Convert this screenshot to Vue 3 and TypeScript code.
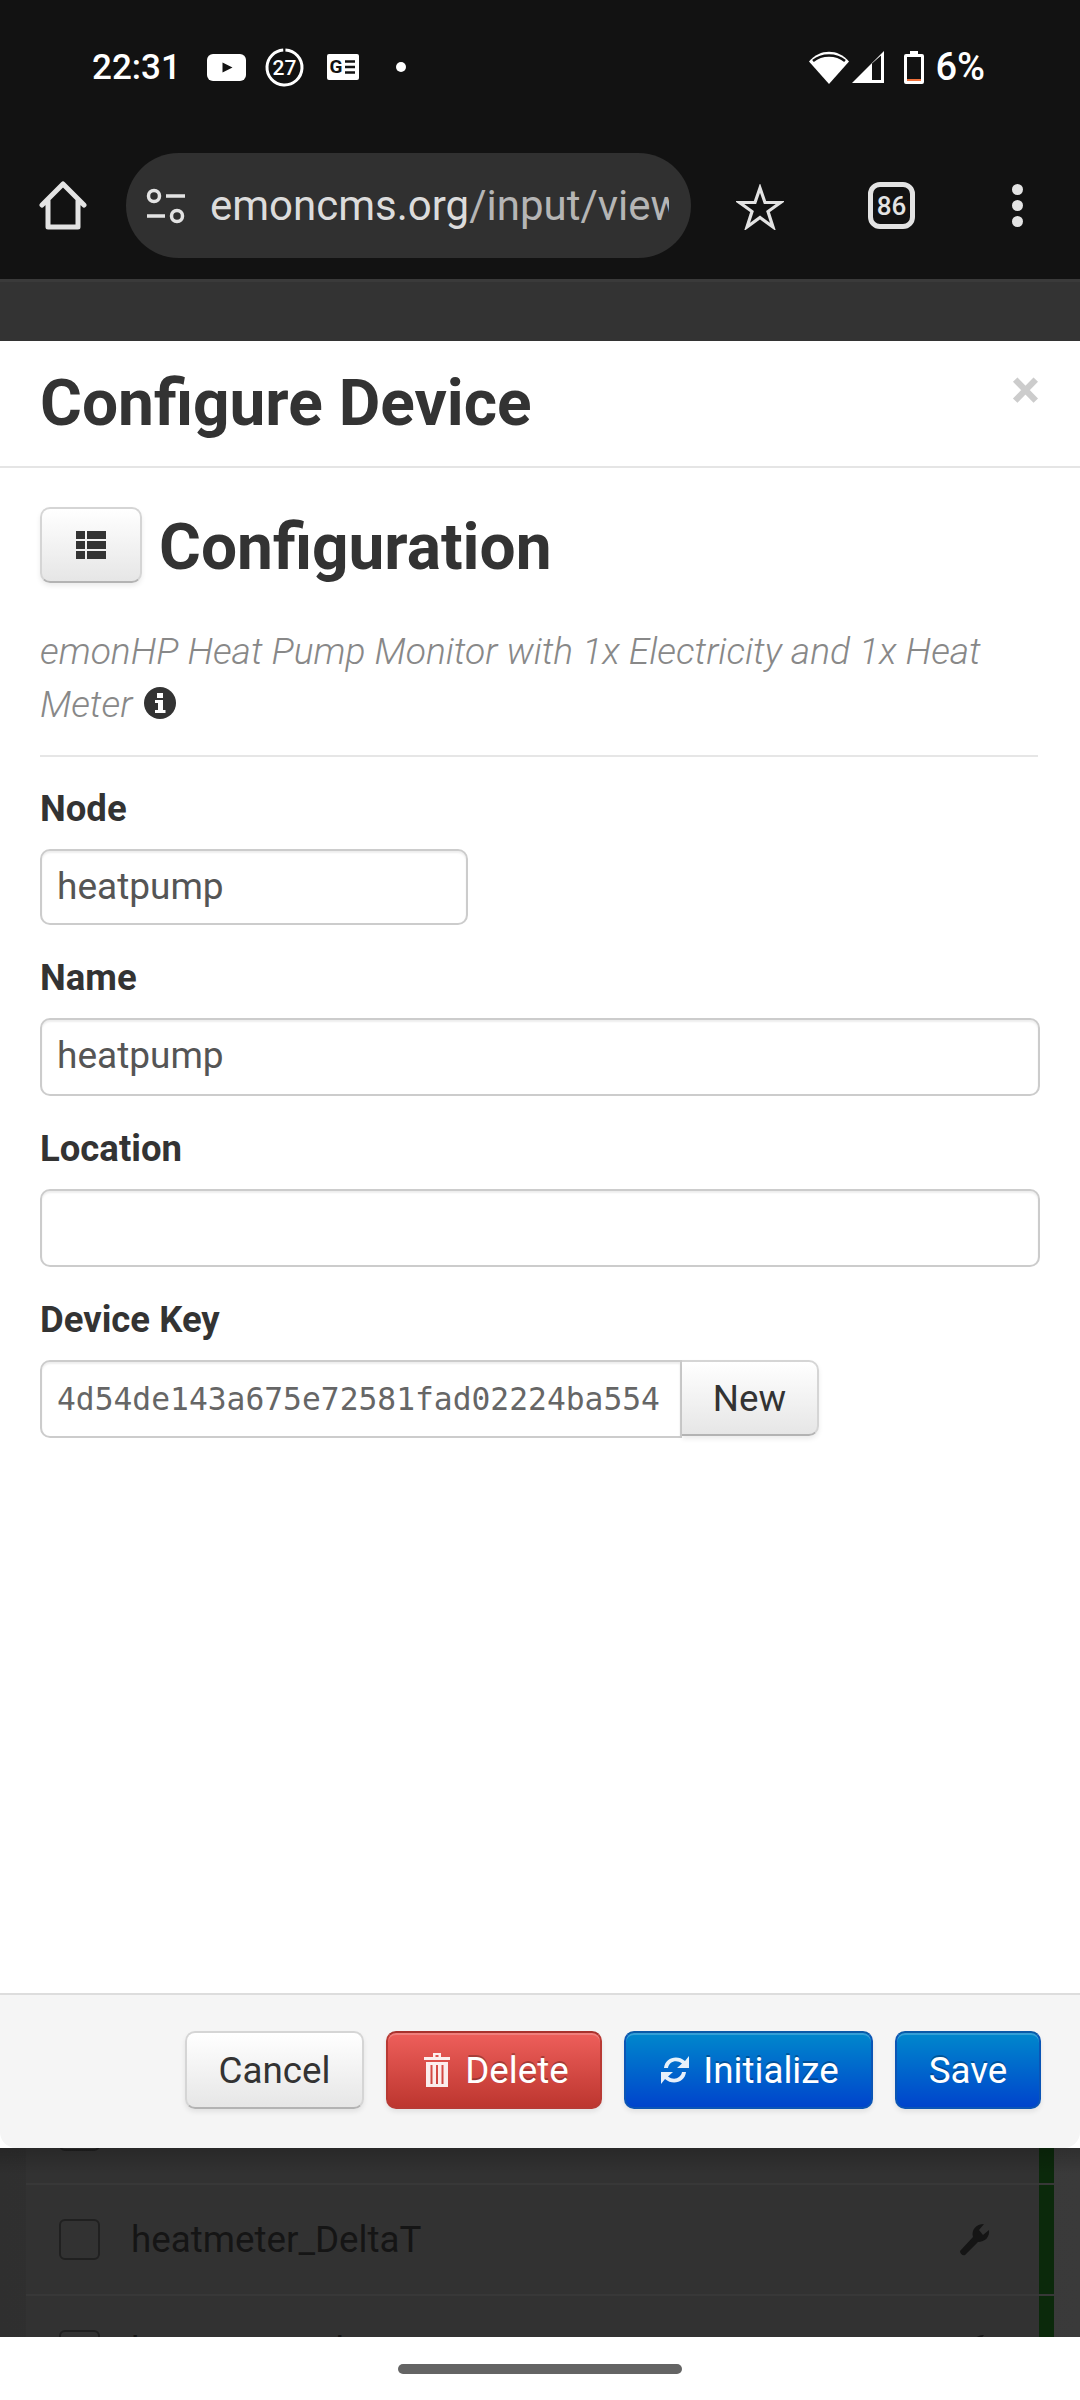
<script setup lang="ts">
const fields = [
  { label: 'Node', value: 'heatpump', short: true },
  { label: 'Name', value: 'heatpump', short: false },
  { label: 'Location', value: '', short: false },
]
const wrench = 'M2 28 15 14C13 7 18 1 26 1L21 7 25 12 31 7C32 14 27 19 20 19L7 32C5 33 2 31 2 28Z'
</script>

<template>
  <div class="screen">
    <header class="chrome">
      <div class="status">
        <div class="status-left">
          <span class="time">22:31</span>
          <svg class="yt" viewBox="0 0 39 27" width="39" height="27"><rect width="39" height="27" rx="6" fill="#fff"/><path d="M15.500 8.500 25.500 13.500 15.500 18.500Z" fill="#121212"/></svg>
          <svg class="cal" viewBox="0 0 39 39" width="39" height="39"><circle cx="19.500" cy="19.500" r="17.500" fill="none" stroke="#fff" stroke-width="3" stroke-dasharray="107 3" transform="rotate(-87 19.500 19.500)"/><text x="19.500" y="27" text-anchor="middle" class="cal-text">27</text></svg>
          <svg class="gn" viewBox="0 0 32 26" width="32" height="26"><rect width="32" height="26" rx="2" fill="#fff"/><text x="9" y="19" text-anchor="middle" class="gn-text">G</text><path d="M18 7.500h10M18 13h10M18 18.500h10" stroke="#121212" stroke-width="2.400"/></svg>
          <span class="dot"></span>
        </div>
        <div class="status-right">
          <svg viewBox="0 0 40 33" width="40" height="33"><path d="M0 10.500C11 -2.500 29 -2.500 40 10.500L20 33Z" fill="#fff"/><path d="M4 10C13 2.500 27 2.500 36 10" fill="none" stroke="#121212" stroke-width="2.500"/></svg>
          <svg class="signal" viewBox="0 0 32 32" width="32" height="32"><path d="M32 0V32H0Z" fill="#fff"/><path d="M20 12.500 29 4.500V29H20Z" fill="#121212"/></svg>
          <svg class="batt" viewBox="0 0 20 33" width="20" height="33"><path d="M6 0h8v3h4a2 2 0 0 1 2 2v26a2 2 0 0 1-2 2H2a2 2 0 0 1-2-2V5a2 2 0 0 1 2-2h4Z" fill="#fff"/><rect x="3" y="6" width="14" height="24" fill="#121212"/><rect x="3" y="28" width="14" height="2" fill="#f0703a"/></svg>
          <span class="pct">6%</span>
        </div>
      </div>
      <div class="toolbar">
        <svg class="home" viewBox="0 0 48 50" width="48" height="50"><path d="M3 24 24 3 45 24M9 19V46H39V19" fill="none" stroke="#e3e3e3" stroke-width="5" stroke-linejoin="round" stroke-linecap="round"/></svg>
        <div class="omnibox">
          <svg viewBox="0 0 40 36" width="40" height="36"><circle cx="8" cy="8" r="5.500" fill="none" stroke="#e3e3e3" stroke-width="3.500"/><path d="M20 8h19M1 28h18" stroke="#e3e3e3" stroke-width="3.500"/><circle cx="31" cy="28" r="5.500" fill="none" stroke="#e3e3e3" stroke-width="3.500"/></svg>
          <div class="url"><span class="host">emoncms.org</span><span class="path">/input/view</span></div>
        </div>
        <svg class="star" viewBox="0 0 48 46" width="48" height="46"><path d="M24 4 29 18.500H44.500L32 27.500 37 43 24 33.500 11 43 16 27.500 3.500 18.500H19Z" fill="none" stroke="#e3e3e3" stroke-width="3.200"/></svg>
        <div class="tabs">86</div>
        <div class="menu"><i></i><i></i><i></i></div>
      </div>
    </header>

    <div class="page-top"></div>

    <section class="modal">
      <div class="modal-head">
        <h3>Configure Device</h3>
        <span class="close">×</span>
      </div>
      <div class="modal-body">
        <div class="config-head">
          <button class="btn list-btn">
            <svg viewBox="0 0 30 28" width="30" height="28"><path d="M0 0h9v8H0ZM11 0h19v8H11ZM0 10h9v8H0ZM11 10h19v8H11ZM0 20h9v8H0ZM11 20h19v8H11Z" fill="#333"/></svg>
          </button>
          <h2>Configuration</h2>
        </div>
        <p class="desc">emonHP Heat Pump Monitor with 1x Electricity and 1x Heat Meter
          <svg class="info" viewBox="0 0 32 32" width="32" height="32"><circle cx="16" cy="16" r="16" fill="#333"/><path d="M13 6h6v5h-6ZM11 13h8v10h2.500v3h-10.500v-3h3v-7h-3Z" fill="#fff"/></svg>
        </p>
        <hr />
        <template v-for="f in fields" :key="f.label">
          <label>{{ f.label }}</label>
          <div class="input" :class="{ short: f.short }">{{ f.value }}</div>
        </template>
        <label>Device Key</label>
        <div class="key-group">
          <div class="key-input">4d54de143a675e72581fad02224ba554</div>
          <button class="btn new-btn">New</button>
        </div>
      </div>
      <div class="modal-foot">
        <button class="btn cancel">Cancel</button>
        <button class="btn danger">
          <svg viewBox="0 0 28 36" width="28" height="36"><path d="M10 1h8v4h9v3H1V5h9ZM12.500 3v2h3V3ZM3 10h22v25H3ZM7.500 13v19h2V13ZM13 13v19h2V13ZM18.500 13v19h2V13Z" fill="#fff" fill-rule="evenodd" fill-opacity=".9"/></svg>
          <span>Delete</span>
        </button>
        <button class="btn primary init">
          <svg viewBox="0 0 32 36" width="32" height="36"><path d="M5 16C6 6 18 2 26 9L30 4V16H18L23 11.500C17 7 10 10 9 16ZM27 20C26 30 14 34 6 27L2 32V20H14L9 24.500C15 29 22 26 23 20Z" fill="#fff" fill-opacity=".9"/></svg>
          <span>Initialize</span>
        </button>
        <button class="btn primary save">Save</button>
      </div>
    </section>

    <div class="page-bottom">
      <div class="row first"><span class="check"></span></div>
      <div class="row">
        <span class="check"></span>
        <span class="name">heatmeter_DeltaT</span>
        <svg class="wrench" viewBox="0 0 33 33" width="33" height="33"><path :d="wrench" fill="#151515"/></svg>
      </div>
      <div class="row">
        <span class="check"></span>
        <span class="name">heatmeter_FlowT</span>
        <svg class="wrench" viewBox="0 0 33 33" width="33" height="33"><path :d="wrench" fill="#151515"/></svg>
      </div>
    </div>

    <footer class="nav"><span class="pill"></span></footer>
  </div>
</template>

<style>
html, body { margin: 0; background: #fff; }
</style>

<style scoped>
.screen { width: 1080px; height: 2400px; display: flex; flex-direction: column; overflow: hidden; font-family: Roboto, "Liberation Sans", sans-serif; color: #333; background: #fff; }
.chrome { height: 279px; flex: none; background: #121212; box-sizing: border-box; }
.status { height: 134px; padding: 47px 0 0 92px; box-sizing: border-box; display: flex; justify-content: space-between; align-items: flex-start; }
.status-left { display: flex; align-items: center; height: 40px; }
.time { color: #fff; font-size: 35px; font-weight: 500; width: 115px; }
.cal { margin-left: 19px; }
.cal-text { font: 500 21px Roboto, sans-serif; fill: #fff; }
.gn { margin-left: 23px; }
.gn-text { font: 700 19px Roboto, sans-serif; fill: #121212; }
.dot { width: 10px; height: 10px; border-radius: 50%; background: #fff; margin-left: 37px; }
.status-right { display: flex; align-items: center; height: 40px; margin-right: 95px; }
.signal { margin-left: 3px; }
.batt { margin-left: 20px; }
.pct { color: #fff; font-size: 38px; font-weight: 500; margin-left: 11px; }
.toolbar { height: 145px; display: flex; align-items: flex-start; padding-left: 39px; }
.home { margin-top: 47px; flex: none; }
.omnibox { margin: 19px 0 0 39px; width: 565px; height: 105px; border-radius: 53px; background: #303030; box-sizing: border-box; padding-left: 20px; display: flex; align-items: center; flex: none; }
.url { margin-left: 24px; width: 459px; overflow: hidden; white-space: nowrap; font-size: 42px; line-height: 60px; }
.host { color: #dcdcdc; }
.path { color: #b5b5b5; }
.star { margin: 50px 0 0 45px; flex: none; }
.tabs { margin: 48px 0 0 84px; width: 47px; height: 47px; box-sizing: border-box; border: 5px solid #e3e3e3; border-radius: 12px; color: #e3e3e3; font-size: 26px; font-weight: 500; display: flex; align-items: center; justify-content: center; flex: none; }
.menu { margin: 50px 0 0 97px; display: flex; flex-direction: column; gap: 5px; flex: none; }
.menu i { display: block; width: 11px; height: 11px; border-radius: 50%; background: #e3e3e3; }
.page-top { height: 62px; flex: none; background: #333; border-top: 3px solid #3a3a3a; box-sizing: border-box; }
.modal { height: 1807px; flex: none; background: #fff; display: flex; flex-direction: column; border-radius: 0 0 16px 16px; position: relative; z-index: 1; }
.modal-head { height: 127px; flex: none; box-sizing: border-box; border-bottom: 2px solid #e5e5e5; padding: 0 40px; position: relative; display: flex; align-items: center; }
h3 { margin: 0; font-size: 64px; font-weight: 700; line-height: 80px; color: #333; }
.close { position: absolute; right: 40px; top: 22px; font-size: 54px; font-weight: 700; line-height: 54px; color: #ccc; }
.modal-body { flex: 1; padding: 39px 40px 0; box-sizing: border-box; }
.config-head { display: flex; align-items: center; gap: 17px; height: 76px; }
h2 { margin: 5px 0 0; font-size: 64px; font-weight: 700; line-height: 78px; color: #333; }
.btn { font-family: Roboto, sans-serif; font-size: 36.750px; border-radius: 10px; box-sizing: border-box; display: inline-flex; align-items: center; justify-content: center; padding: 0; color: #333; background: linear-gradient(#fff, #e6e6e6); border: 2px solid #d5d5d5; border-bottom-color: #b3b3b3; box-shadow: 0 3px 5px rgba(0,0,0,.08); }
.list-btn { width: 102px; height: 76px; flex: none; }
.desc { margin: 42px 0 0; font-style: italic; font-weight: 300; font-size: 37.200px; line-height: 53px; color: #888; width: 960px; }
.info { vertical-align: -2px; margin-left: 3px; }
hr { border: 0; border-top: 2px solid #e6e6e6; margin: 24px 0 0; width: 998px; }
label { display: block; font-size: 36.500px; font-weight: 700; line-height: 50px; margin-top: 28px; color: #333; }
hr + label { margin-top: 27px; }
.input { margin-top: 15px; height: 78px; box-sizing: border-box; border: 2px solid #ccc; border-radius: 10px; font-size: 37px; line-height: 72px; padding-left: 15px; color: #555; box-shadow: inset 0 2px 2px rgba(0,0,0,.07); }
.input.short { width: 428px; height: 76px; }
.key-group { margin-top: 15px; display: flex; }
.key-input { width: 642px; height: 78px; box-sizing: border-box; border: 2px solid #ccc; border-radius: 10px 0 0 10px; font-family: "DejaVu Sans Mono", monospace; font-size: 31.300px; line-height: 74px; padding-left: 15px; color: #666; white-space: nowrap; overflow: hidden; box-shadow: inset 0 2px 2px rgba(0,0,0,.07); }
.new-btn { width: 137px; height: 76px; border-radius: 0 10px 10px 0; border-left: 0; }
.modal-foot { height: 155px; flex: none; box-sizing: border-box; background: #f5f5f5; border-top: 2px solid #ddd; border-radius: 0 0 16px 16px; display: flex; justify-content: flex-end; align-items: center; gap: 22px; padding: 0 39px 3px 0; }
.modal-foot .btn { height: 78px; gap: 14px; }
.modal-foot .init { gap: 12px; padding-left: 1px; }
.cancel { width: 179px; }
.danger { width: 216px; padding-left: 4px; background: linear-gradient(#ee5f5b, #bd362f); border: 2px solid #b83a34; border-top-color: #a8322d; color: #fff; text-shadow: 0 -2px 0 rgba(0,0,0,.25); box-shadow: inset 0 2px 0 rgba(255,255,255,.2), 0 3px 5px rgba(0,0,0,.08); }
.primary { width: 249px; background: linear-gradient(#0088cc, #0044cc); border: 2px solid #0b55b5; border-top-color: #0a5aa8; color: #fff; text-shadow: 0 -2px 0 rgba(0,0,0,.25); box-shadow: inset 0 2px 0 rgba(255,255,255,.2), 0 3px 5px rgba(0,0,0,.08); }
.primary.save { width: 146px; }
.page-bottom { height: 189px; flex: none; background: linear-gradient(90deg, #2f2f2f, #3a3a3a); overflow: hidden; padding: 0 26px; box-sizing: border-box; position: relative; }
.page-bottom::after { content: ""; position: absolute; left: 0; right: 0; top: 0; height: 26px; background: linear-gradient(rgba(0,0,0,.2), rgba(0,0,0,0)); }
.row { height: 111px; box-sizing: border-box; background: #323232; border-bottom: 2px solid #383838; display: flex; align-items: center; padding-left: 33px; position: relative; }
.row::after { content: ""; position: absolute; right: 0; top: 0; bottom: 0; width: 15px; background: #0b290b; }
.row.first { height: 37px; align-items: flex-end; overflow: hidden; }
.row.first .check { margin-bottom: 32px; }
.check { width: 41px; height: 41px; border: 2px solid #202020; border-radius: 6px; box-sizing: border-box; flex: none; }
.name { margin-left: 31px; font-size: 36.750px; color: #151515; }
.wrench { position: absolute; left: 932px; top: 38px; }
.nav { height: 63px; flex: none; background: #fff; display: flex; justify-content: center; padding-top: 27px; box-sizing: border-box; }
.pill { width: 284px; height: 10px; border-radius: 5px; background: #646464; }
</style>
